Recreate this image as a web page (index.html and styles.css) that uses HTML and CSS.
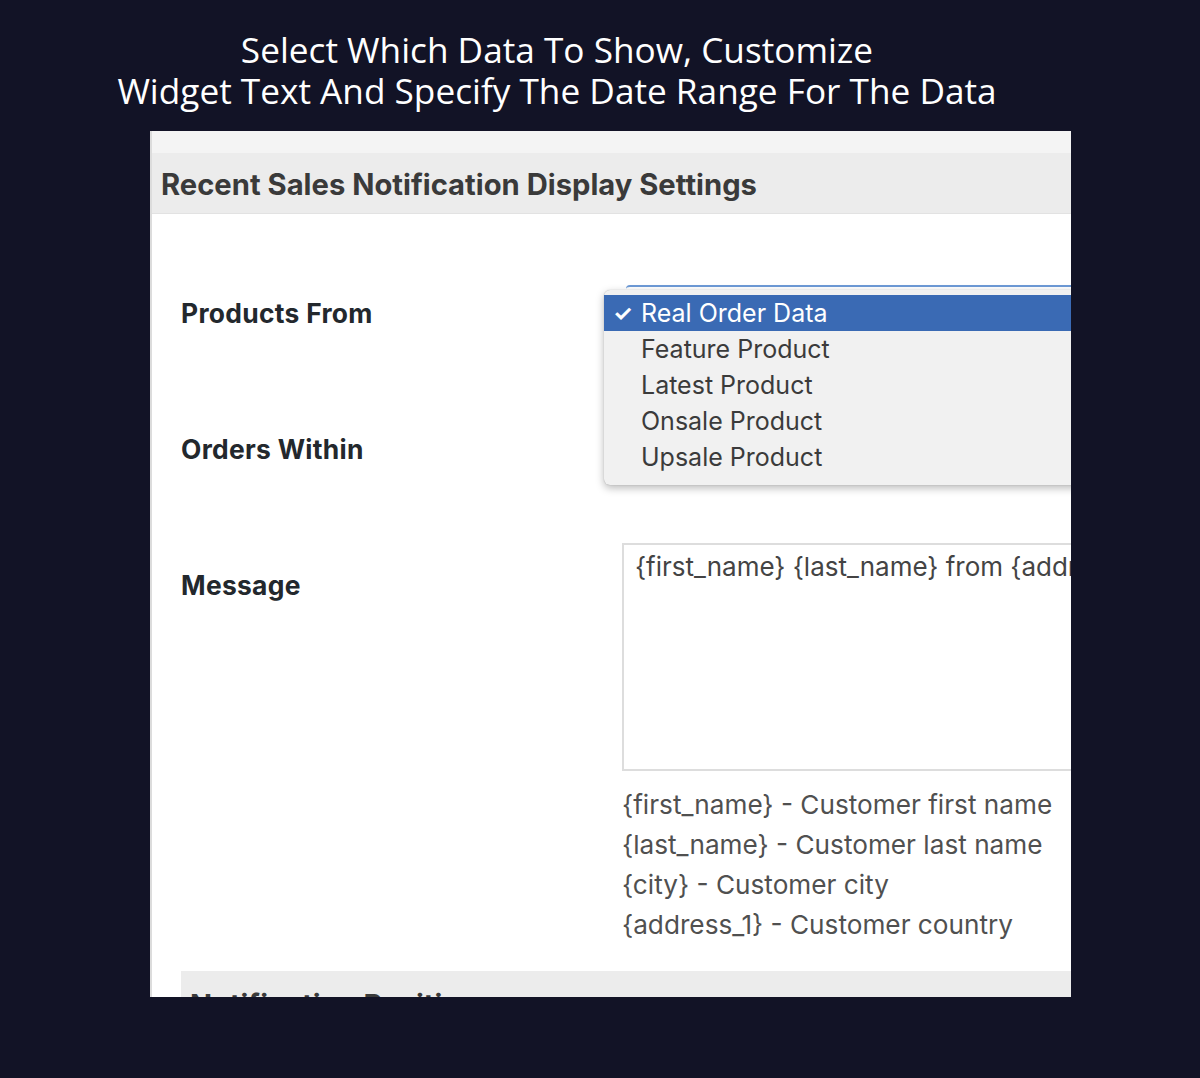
FILE: index.html
```html
<!DOCTYPE html>
<html lang="en">
<head>
<meta charset="utf-8">
<title>Recent Sales Notification Display Settings</title>
<link rel="stylesheet" href="styles.css">
</head>
<body>
<div class="page">
  <h1 class="caption"><span class="cap-line">Select Which Data To Show, Customize</span><span class="cap-line">Widget Text And Specify The Date Range For The Data</span></h1>
  <div class="shot">
    <div class="topstrip"></div>
    <div class="sec-head">Recent Sales Notification Display Settings</div>
    <div class="settings">
      <div class="row row-products">
        <div class="label">Products From</div>
        <div class="control">
          <div class="select-box"></div>
          <ul class="menu">
            <li class="item active"><span class="check">&#10003;</span>Real Order Data</li>
            <li class="item">Feature Product</li>
            <li class="item">Latest Product</li>
            <li class="item">Onsale Product</li>
            <li class="item">Upsale Product</li>
          </ul>
        </div>
      </div>
      <div class="row row-orders">
        <div class="label">Orders Within</div>
        <div class="control"></div>
      </div>
      <div class="row row-message">
        <div class="label">Message</div>
        <div class="control">
          <div class="textarea">{first_name} {last_name} from {address_1} purchased {product}</div>
          <ul class="tags">
            <li>{first_name} - Customer first name</li>
            <li>{last_name} - Customer last name</li>
            <li>{city} - Customer city</li>
            <li>{address_1} - Customer country</li>
          </ul>
        </div>
      </div>
      <div class="next-head">Notification Position</div>
    </div>
  </div>
</div>
</body>
</html>
```

FILE: styles.css
```css
html, body {
  margin: 0;
  padding: 0;
  background: #121326;
}
.page {
  width: 1200px;
  height: 1078px;
  overflow: hidden;
}
.caption {
  margin: 0;
  width: 1114px;
  padding-top: 29px;
  height: 131px;
  box-sizing: border-box;
  text-align: center;
  color: #ffffff;
  font-family: "Open Sans", sans-serif;
  font-weight: 400;
  font-size: 35.2px;
  line-height: 41px;
}
.cap-line {
  display: block;
  height: 41px;
}
.shot {
  margin-left: 150px;
  width: 921px;
  height: 866px;
  background: #ffffff;
  border-left: 2px solid #dcdcdc;
  box-sizing: border-box;
  overflow: hidden;
  font-family: "Inter", "Liberation Sans", Arial, sans-serif;
}
.topstrip {
  height: 22px;
  background: #f4f4f4;
}
.sec-head {
  height: 61px;
  background: #ececec;
  border-bottom: 1px solid #e2e2e2;
  display: flex;
  align-items: center;
  padding: 3px 0 0 9px;
  box-sizing: border-box;
  font-weight: 700;
  font-size: 29.2px;
  color: #3a3a3a;
}
.settings {
  padding: 71px 0 0 29px;
}
.row {
  display: flex;
}
.label {
  width: 441px;
  flex: none;
  font-weight: 700;
  font-size: 26.4px;
  letter-spacing: 0.3px;
  line-height: 36px;
  color: #23282d;
}
.control {
  position: relative;
  flex: 1;
}
.row-products {
  height: 136px;
}
.row-products .label {
  padding-top: 10px;
}
.row-orders {
  height: 122px;
}
.row-orders .label {
  padding-top: 10px;
}
.row-message .label {
  padding-top: 24px;
}
.select-box {
  height: 36px;
  border-top: 2px solid #6d9ad6;
  border-radius: 4px 0 0 0;
  margin-left: 4px;
}
.menu {
  position: absolute;
  left: -18px;
  top: 5px;
  width: 520px;
  margin: 0;
  padding: 5px 0 10px;
  list-style: none;
  background: #f1f1f1;
  border-radius: 6px;
  box-shadow: 0 3px 8px rgba(0, 0, 0, 0.28), 0 0 1px rgba(0, 0, 0, 0.3);
}
.item {
  position: relative;
  height: 36px;
  line-height: 36px;
  padding-left: 37px;
  font-size: 25px;
  color: #3b3b3b;
}
.item.active {
  background: #3a6ab4;
  color: #ffffff;
}
.check {
  position: absolute;
  left: 9px;
  top: 0;
  font-size: 22px;
  font-weight: 700;
}
.textarea {
  height: 228px;
  box-sizing: border-box;
  border: 2px solid #dddddd;
  padding: 6px 11px;
  font-size: 26px;
  line-height: 32px;
  color: #444444;
  white-space: nowrap;
  overflow: hidden;
}
.tags {
  margin: 14px 0 0;
  padding: 0;
  list-style: none;
  font-size: 26.2px;
  line-height: 40px;
  color: #505050;
}
.next-head {
  margin-top: 26px;
  height: 60px;
  background: #ececec;
  padding: 16px 0 0 9px;
  box-sizing: border-box;
  font-weight: 700;
  font-size: 29px;
  color: #3a3a3a;
}
```
